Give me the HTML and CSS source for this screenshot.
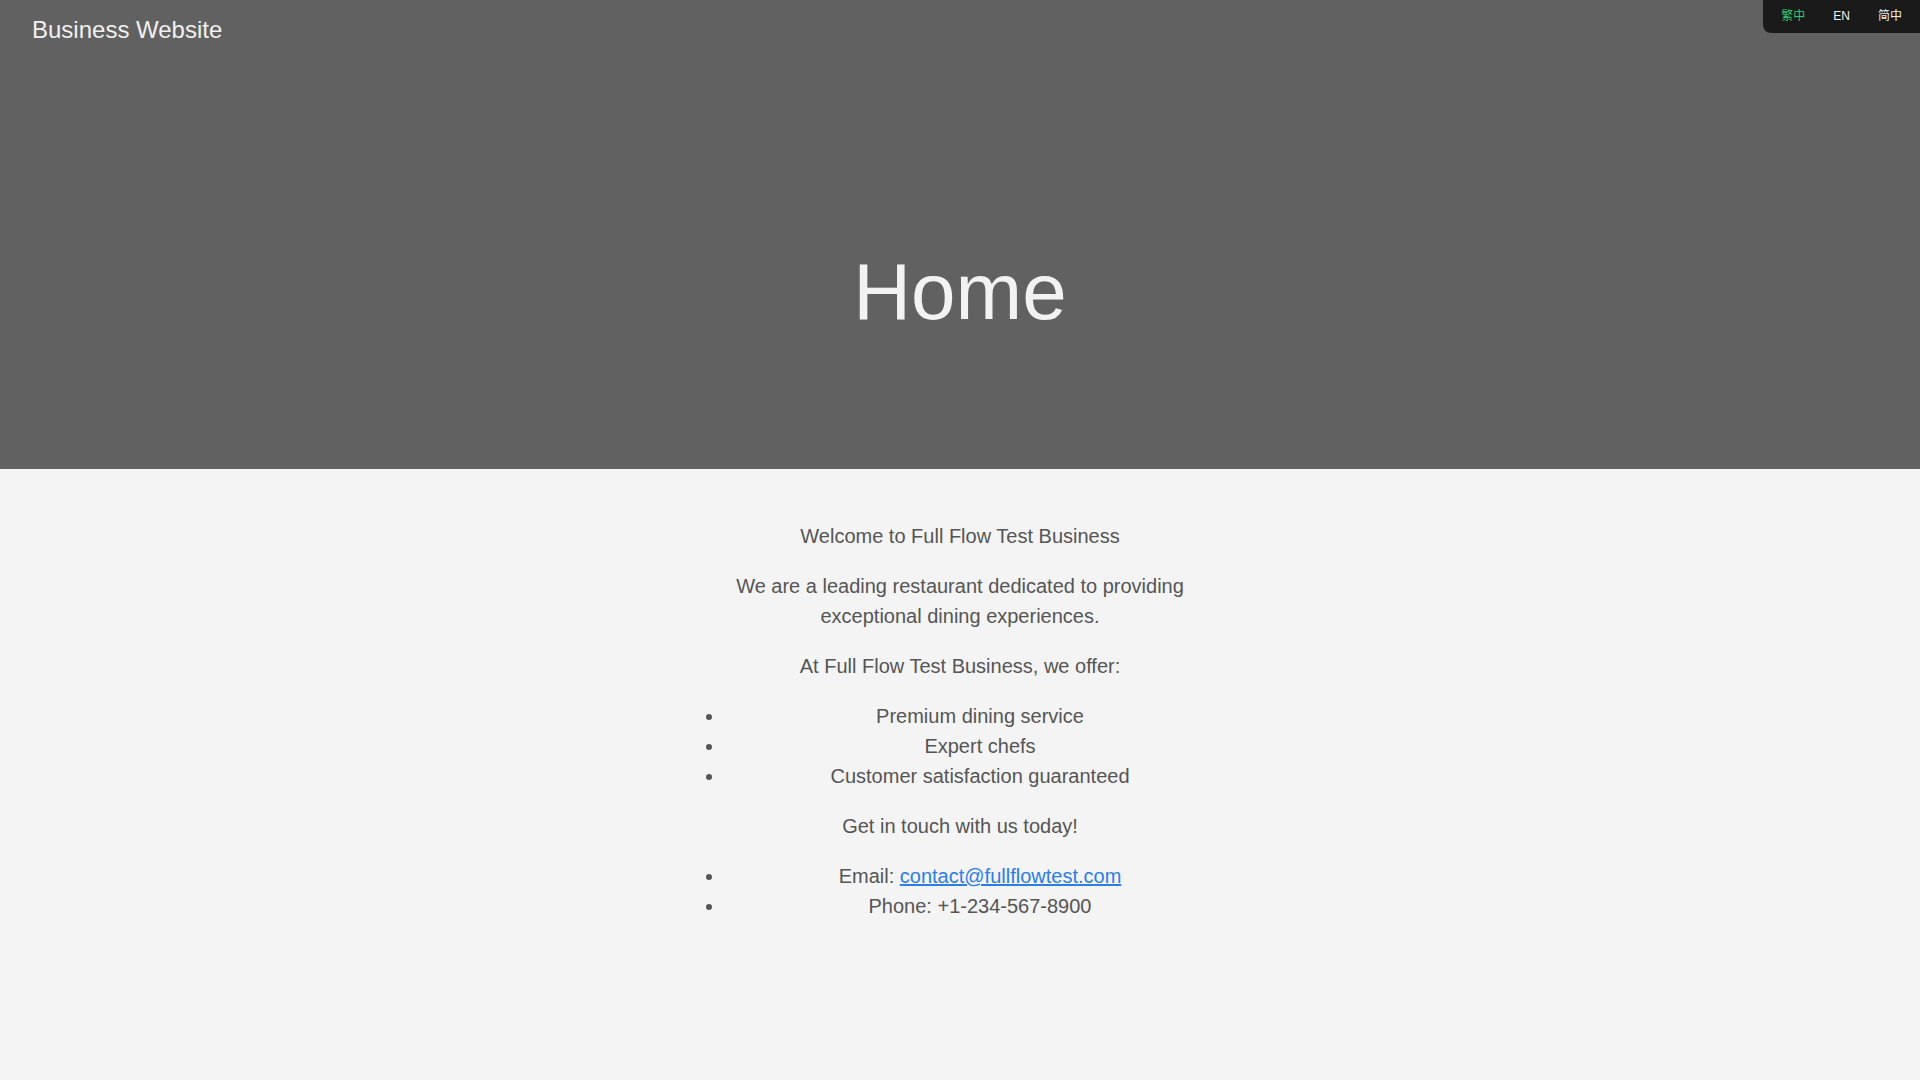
FILE: index.html
```html
<!DOCTYPE html>
<html lang="en">
<head>
<meta charset="utf-8">
<title>Business Website</title>
<link rel="stylesheet" href="styles.css">
</head>
<body>
<div class="lang-switch">
  <button class="lang active">繁中</button>
  <button class="lang">EN</button>
  <button class="lang">简中</button>
</div>
<header class="hero">
  <div class="site-bar">
    <span class="site-name">Business Website</span>
  </div>
  <div class="hero-body">
    <h1 class="hero-title">Home</h1>
  </div>
</header>
<main class="content">
  <p>Welcome to Full Flow Test Business</p>
  <p>We are a leading restaurant dedicated to providing exceptional dining experiences.</p>
  <p>At Full Flow Test Business, we offer:</p>
  <ul>
    <li>Premium dining service</li>
    <li>Expert chefs</li>
    <li>Customer satisfaction guaranteed</li>
  </ul>
  <p>Get in touch with us today!</p>
  <ul>
    <li>Email: <a href="#">contact@fullflowtest.com</a></li>
    <li>Phone: +1-234-567-8900</li>
  </ul>
</main>
</body>
</html>
```
FILE: styles.css
```css
html, body {
  margin: 0;
  padding: 0;
}
body {
  background: #f4f4f4;
  font-family: "Liberation Sans", Arial, sans-serif;
  color: #555555;
  min-height: 100vh;
}
.hero {
  background: #616161;
  height: 469px;
  display: flex;
  flex-direction: column;
}
.site-bar {
  padding: 16px 32px;
}
.site-name {
  font-size: 24px;
  color: #f0f0f0;
}
.hero-body {
  padding-top: 186px;
  text-align: center;
}
.hero-title {
  margin: 0;
  font-size: 80px;
  font-weight: 400;
  color: #f2f2f2;
  line-height: normal;
}
.lang-switch {
  position: fixed;
  top: 0;
  right: 0;
  background: #1a1a1a;
  border-bottom-left-radius: 8px;
  padding: 5px 4px;
  display: flex;
}
.lang {
  background: none;
  border: none;
  padding: 4px 14px;
  font-family: "Liberation Sans", "Noto Sans CJK SC", sans-serif;
  font-size: 12px;
  line-height: 15px;
  color: #eeeeee;
  cursor: pointer;
}
.lang.active {
  color: #2ecc71;
}
.content {
  max-width: 550px;
  margin: 0 auto;
  padding: 32px 0;
  text-align: center;
  font-size: 20px;
  line-height: 1.5;
}
.content p {
  margin: 20px 0;
}
.content ul {
  margin: 20px 0;
  padding-left: 40px;
}
.content a {
  color: #2b7de9;
}
```
